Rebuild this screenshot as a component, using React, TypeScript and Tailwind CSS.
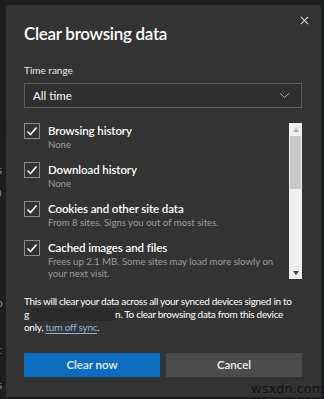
import React from "react";

const items = [
  { t: "Browsing history", s: ["None"] },
  { t: "Download history", s: ["None"] },
  { t: "Cookies and other site data", s: ["From 8 sites. Signs you out of most sites."] },
  { t: "Cached images and files", s: ["Frees up 2.1 MB. Some sites may load more slowly on", "your next visit."] },
];

function Check() {
  return (
    <div className="w-[16px] h-[16px] border border-[#8c8c8c] flex items-center justify-center shrink-0">
      <svg width="12" height="12" viewBox="0 0 12 12">
        <path d="M1.5 6.5 L4.5 9.5 L10.5 2.5" fill="none" stroke="#ffffff" strokeWidth="1.6" />
      </svg>
    </div>
  );
}

export default function App() {
  return (
    <div
      className="relative w-[324px] h-[399px] bg-[#1c1d1f] overflow-hidden"
      style={{ fontFamily: 'Lato, "Noto Sans", sans-serif' }}
    >
      <div className="absolute left-0 top-0 w-[6px] h-full text-[12px] leading-none text-[#7d8da0]">
        <div className="absolute left-[-4px] top-[46px]">i</div>
        <div className="absolute left-[-4px] top-[124px]">f</div>
        <div className="absolute left-[-3px] top-[164px]">s</div>
        <div className="absolute left-[-5px] top-[186px]">n</div>
        <div className="absolute left-[-5px] top-[236px] text-[#555]">r</div>
        <div className="absolute left-[-4px] top-[297px]">o</div>
        <div className="absolute left-[-3px] top-[327px]">i</div>
        <div className="absolute left-[-4px] top-[344px] text-[#5a8fc0]">c</div>
        <div className="absolute left-[-3px] top-[379px]">s</div>
      </div>
      <div className="absolute left-[6px] top-[5px] w-[315px] h-[392px] bg-[#333333] flex flex-col pl-[18px] pr-[19px]">
        <div className="absolute right-[12px] top-[11px]">
          <svg width="9" height="9" viewBox="0 0 10 10">
            <path d="M1 1 L9 9 M9 1 L1 9" stroke="#d8d8d8" strokeWidth="1.2" />
          </svg>
        </div>
        <div className="mt-[18px] h-[22px] text-[17px] leading-[22px] font-semibold tracking-[-0.3px] text-white">Clear browsing data</div>
        <div className="mt-[17px] h-[16px] text-[10px] leading-[16px] text-[#e8e8e8]">Time range</div>
        <div className="mt-[5px] h-[25px] border border-[#5c5c5c] bg-[#2f2f2f] flex items-center justify-between pl-[8px] pr-[11px]">
          <span className="text-[11.5px] text-white">All time</span>
          <svg width="11" height="7" viewBox="0 0 12 8">
            <path d="M1 1.5 L6 6.5 L11 1.5" fill="none" stroke="#c0c0c0" strokeWidth="1.1" />
          </svg>
        </div>
        <div className="mt-[12px] h-[160px] flex">
          <div className="flex-1 flex flex-col gap-[11px] pt-[3px] overflow-hidden">
            {items.map((it) => (
              <div key={it.t} className="flex gap-[8px]">
                <Check />
                <div className="flex flex-col">
                  <div className="h-[16px] text-[11.5px] leading-[16px] font-semibold tracking-[-0.1px] text-white">{it.t}</div>
                  {it.s.map((l) => (
                    <div key={l} className="h-[12px] text-[9.6px] leading-[12px] text-[#9c9c9c] whitespace-nowrap">{l}</div>
                  ))}
                </div>
              </div>
            ))}
          </div>
          <div className="w-[13px] ml-[3px] mt-[3px] h-[156px] bg-[#f0f0f0] flex flex-col items-center">
            <div className="h-[13px] flex items-center justify-center">
              <svg width="6" height="4" viewBox="0 0 6 4"><path d="M0 4 L3 0 L6 4 Z" fill="#b0b0b0" /></svg>
            </div>
            <div className="w-[11px] h-[53px] bg-[#c9c9c9]" />
            <div className="flex-1" />
            <div className="h-[13px] flex items-center justify-center">
              <svg width="6" height="4" viewBox="0 0 6 4"><path d="M0 0 L3 4 L6 0 Z" fill="#404040" /></svg>
            </div>
          </div>
        </div>
        <div className="mt-[15px] text-[10px] leading-[13px] tracking-[-0.3px] text-white whitespace-nowrap">
          <div>This will clear your data across all your synced devices signed in to</div>
          <div className="flex">
            <span>g</span>
            <span className="inline-block w-[84px] h-[13px] bg-[#2a2a2a] ml-[2px]" />
            <span>n. To clear browsing data from this device</span>
          </div>
          <div>
            only, <span className="text-[#8db4d8] underline underline-offset-2 decoration-[#8db4d8]">turn off sync</span>.
          </div>
        </div>
        <div className="mt-[19px] flex gap-[6px]">
          <div className="flex-1 h-[24px] bg-[#0b6cc0] flex items-center justify-center text-[11.5px] font-semibold text-[#e8f1fa]">
            Clear now
          </div>
          <div className="flex-1 h-[24px] bg-[#4b4b4b] flex items-center justify-center text-[11.5px] font-semibold text-[#f0f0f0]">
            Cancel
          </div>
        </div>
      </div>
      <div
        className="absolute left-[251px] top-[381px] text-[13px] leading-[15px] text-[#111]"
        style={{ fontFamily: '"DejaVu Sans", sans-serif' }}
      >
        wsxdn.com
      </div>
    </div>
  );
}
